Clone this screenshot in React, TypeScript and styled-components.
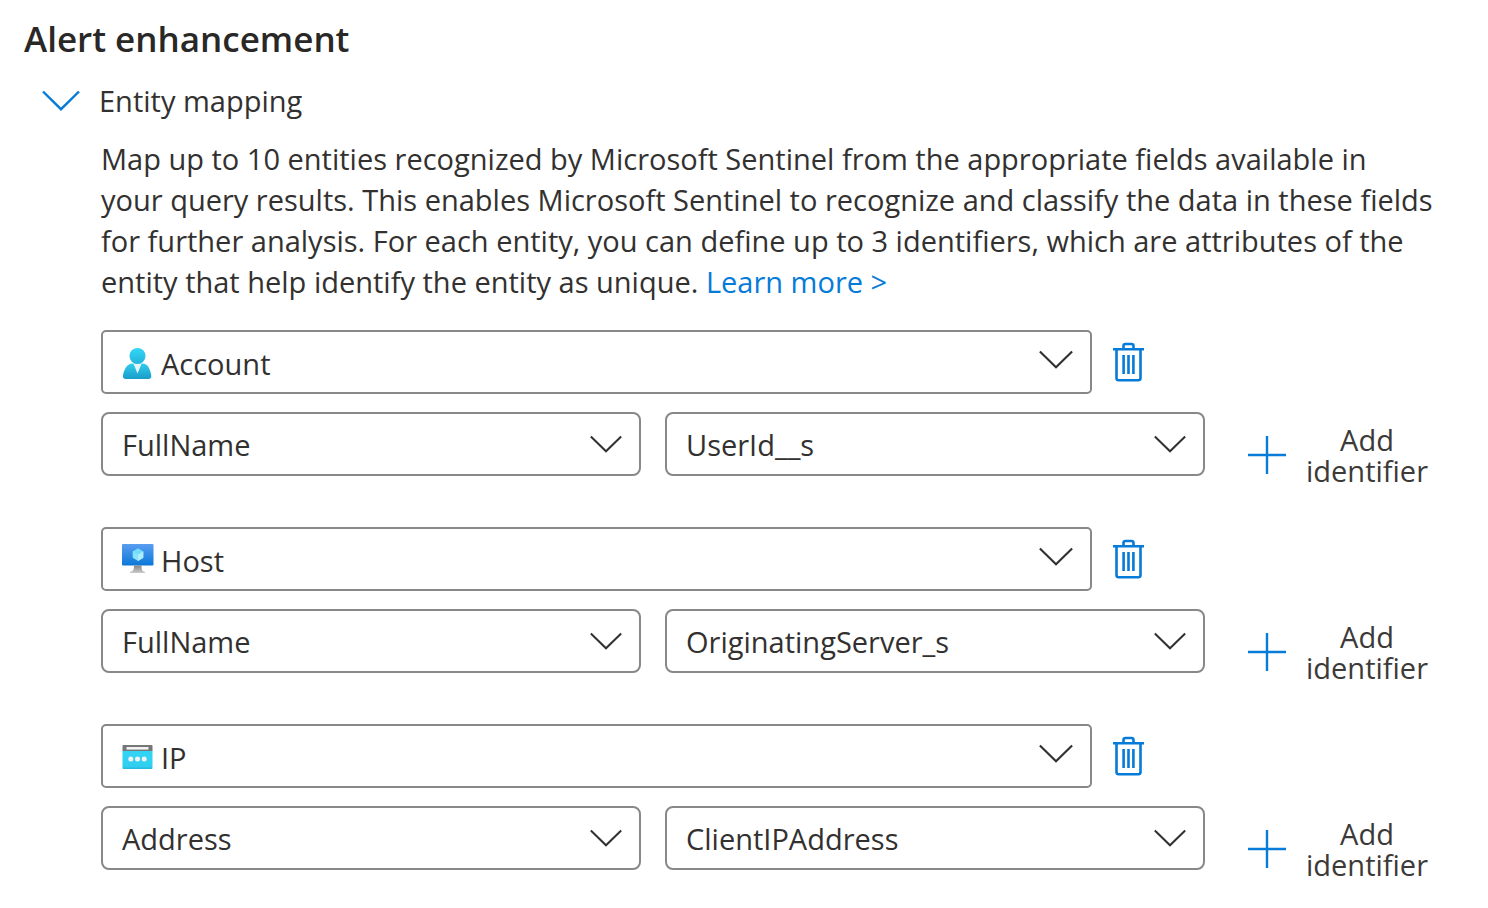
import React, { useState } from "react";
import styled, { createGlobalStyle } from "styled-components";

const GlobalStyle = createGlobalStyle`
  *, *::before, *::after { box-sizing: border-box; }
  body {
    margin: 0;
    background: #ffffff;
    color: #323130;
    font-family: "Segoe UI", "Open Sans", "Noto Sans", sans-serif;
    font-size: 29px;
    line-height: 41px;
  }
`;

const blue = "#067bd8";

const Page = styled.main`
  padding: 15px 44px 36px 24px;
`;

const Title = styled.h1`
  margin: 0;
  font-size: 35px;
  font-weight: 600;
  line-height: 48px;
  color: #292827;
`;

const SectionToggle = styled.button`
  display: flex;
  align-items: center;
  gap: 19px;
  margin-top: 17px;
  padding: 0 0 0 18px;
  border: 0;
  background: none;
  color: inherit;
  font: inherit;
  cursor: pointer;
`;

const SectionBody = styled.section`
  padding-left: 77px;
`;

const Description = styled.p`
  margin: 17px 0 28px;
`;

const LearnMore = styled.a`
  color: ${blue};
  text-decoration: none;
  &:hover { text-decoration: underline; }
`;

const MappingList = styled.div`
  display: flex;
  flex-direction: column;
  gap: 51px;
`;

const Mapping = styled.div`
  display: flex;
  flex-direction: column;
  gap: 18px;
`;

const EntityRow = styled.div`
  display: flex;
  align-items: center;
  gap: 20px;
  padding-right: 299px;
`;

const IdentifierRow = styled.div`
  display: flex;
  gap: 43px;
  height: 64px;
  padding-right: 16px;
`;

const IdentifierFields = styled.div`
  flex: 1;
  display: grid;
  grid-template-columns: 1fr 1fr;
  gap: 24px;
`;

const Field = styled.div`
  position: relative;
  flex: 1;
  min-width: 0;
`;

const Select = styled.select<{ $entity?: boolean }>`
  display: block;
  width: 100%;
  height: 64px;
  padding: ${(p) => (p.$entity ? "3px 60px 0 58px" : "1px 60px 0 19px")};
  appearance: none;
  border: 2px solid #8a8886;
  border-radius: ${(p) => (p.$entity ? "5px" : "8px")};
  background: #ffffff;
  color: inherit;
  font: inherit;
  cursor: pointer;
`;

const FieldIcon = styled.span`
  position: absolute;
  top: 16px;
  left: 21px;
  display: flex;
  pointer-events: none;
`;

const FieldChevron = styled.span<{ $entity?: boolean }>`
  position: absolute;
  top: ${(p) => (p.$entity ? "20px" : "23px")};
  right: 19px;
  display: flex;
  pointer-events: none;
`;

const DeleteButton = styled.button`
  display: flex;
  padding: 0;
  border: 0;
  background: none;
  color: ${blue};
  cursor: pointer;
`;

const AddButton = styled.button`
  display: flex;
  align-items: center;
  gap: 20px;
  flex: none;
  height: 86px;
  padding: 0;
  border: 0;
  background: none;
  color: #3b3a39;
  font: inherit;
  line-height: 31px;
  cursor: pointer;
`;

const AddLabel = styled.span`
  width: 122px;
  text-align: center;
`;

const Chevron = ({ width, color }: { width: number; color: string }) => (
  <svg width={width} height={width / 2 + 2} viewBox="0 0 38 21" fill="none" stroke={color} strokeWidth="2.4" aria-hidden="true">
    <path d="M1 1.5 19 19.2 37 1.5" />
  </svg>
);

const TrashIcon = () => (
  <svg width="33" height="40" viewBox="0 0 33 40" fill="none" stroke="currentColor" strokeWidth="2.6" aria-hidden="true">
    <path d="M1 7.2h31M11.5 7V4a2 2 0 0 1 2-2h6a2 2 0 0 1 2 2v3M4.5 7.5V36a2.2 2.2 0 0 0 2.2 2.2h19.6a2.2 2.2 0 0 0 2.2-2.2V7.5" />
    <path d="M11.6 13v19M16.5 13v19M21.4 13v19" />
  </svg>
);

const PlusIcon = () => (
  <svg width="38" height="38" viewBox="0 0 38 38" stroke={blue} strokeWidth="2.4" aria-hidden="true">
    <path d="M19 0v38M0 19h38" />
  </svg>
);

const AccountIcon = () => (
  <svg width="34" height="34" viewBox="0 0 34 34" aria-hidden="true">
    <defs>
      <linearGradient id="accountBody" x1="0" y1="0" x2="0" y2="1">
        <stop offset="0" stopColor="#32cdec" />
        <stop offset="1" stopColor="#199cc9" />
      </linearGradient>
      <linearGradient id="accountHead" x1="0" y1="0" x2="0" y2="1">
        <stop offset="0" stopColor="#32d8f5" />
        <stop offset="1" stopColor="#25b3da" />
      </linearGradient>
    </defs>
    <path d="M3.5 33a2.600 2.600 0 0 1-2.600-3C2 23 5.400 17.600 10.500 17.600h10C25.600 17.600 28.400 23 29.300 30a2.600 2.600 0 0 1-2.600 3Z" fill="url(#accountBody)" />
    <path d="M11.300 17.500h8.400L15.500 27.500Z" fill="#e3f7fb" />
    <circle cx="15.500" cy="10" r="8" fill="url(#accountHead)" />
  </svg>
);

const HostIcon = () => (
  <svg width="34" height="34" viewBox="0 0 34 34" aria-hidden="true">
    <defs>
      <linearGradient id="hostScreen" x1="0" y1="0" x2="0" y2="1">
        <stop offset="0" stopColor="#5a9df0" />
        <stop offset="1" stopColor="#0b78d8" />
      </linearGradient>
      <linearGradient id="hostStand" x1="0" y1="0" x2="0" y2="1">
        <stop offset="0" stopColor="#858585" />
        <stop offset="1" stopColor="#cccccc" />
      </linearGradient>
    </defs>
    <rect y="1" width="31.500" height="21.500" rx="1" fill="url(#hostScreen)" />
    <path d="M12 22.500h7.500c0 4 .5 5.500 3.500 6.500V30H8v-1c3.500-1 4-2.500 4-6.500Z" fill="url(#hostStand)" />
    <path d="m16 5.500 5.300 3v6.300L16 18l-5.300-3.200V8.500Z" fill="#86e5fb" />
    <path d="m16 5.500 5.300 3L16 11.700l-5.300-3.200Z" fill="#74dcfa" />
    <path d="m21.300 8.500-5.300 3.200V18l5.300-3.200Z" fill="#b0edfc" />
  </svg>
);

const IpIcon = () => (
  <svg width="34" height="34" viewBox="0 0 34 34" aria-hidden="true">
    <defs>
      <linearGradient id="ipBody" x1="0" y1="0" x2="0" y2="1">
        <stop offset="0" stopColor="#32d4f5" />
        <stop offset=".85" stopColor="#30cff0" />
        <stop offset="1" stopColor="#25b4db" />
      </linearGradient>
    </defs>
    <path d="M.5 10.500h30V28a1 1 0 0 1-1 1h-28a1 1 0 0 1-1-1Z" fill="url(#ipBody)" />
    <path d="M1.500 5h28a1 1 0 0 1 1 1v5H.5V6a1 1 0 0 1 1-1Z" fill="#767676" />
    <rect x="4.500" y="7" width="22" height="2.600" fill="#f2f2f2" />
    <g fill="#f2f2f2">
      <circle cx="8.800" cy="19" r="2.500" />
      <circle cx="15.500" cy="19" r="2.500" />
      <circle cx="22.200" cy="19" r="2.500" />
    </g>
  </svg>
);

const mappings = [
  { entity: "Account", icon: <AccountIcon />, identifier: "FullName", value: "UserId__s" },
  { entity: "Host", icon: <HostIcon />, identifier: "FullName", value: "OriginatingServer_s" },
  { entity: "IP", icon: <IpIcon />, identifier: "Address", value: "ClientIPAddress" },
];

const Dropdown = ({ label, value, icon }: { label: string; value: string; icon?: React.ReactNode }) => (
  <Field>
    <Select aria-label={label} defaultValue={value} $entity={!!icon}>
      <option>{value}</option>
    </Select>
    {icon && <FieldIcon>{icon}</FieldIcon>}
    <FieldChevron $entity={!!icon}>
      <Chevron width={icon ? 34 : 32} color="#323130" />
    </FieldChevron>
  </Field>
);

export default function App() {
  const [open, setOpen] = useState(true);
  return (
    <>
      <GlobalStyle />
      <Page>
        <Title>Alert enhancement</Title>
        <SectionToggle type="button" aria-expanded={open} onClick={() => setOpen(!open)}>
          <Chevron width={38} color={blue} />
          Entity mapping
        </SectionToggle>
        {open && (
          <SectionBody>
            <Description>
              Map up to 10 entities recognized by Microsoft Sentinel from the appropriate fields available in
              <br />
              your query results. This enables Microsoft Sentinel to recognize and classify the data in these fields
              for further analysis. For each entity, you can define up to 3 identifiers, which are attributes of the
              <br />
              entity that help identify the entity as unique. <LearnMore href="#learn-more">Learn more &gt;</LearnMore>
            </Description>
            <MappingList>
              {mappings.map((m) => (
                <Mapping key={m.entity}>
                  <EntityRow>
                    <Dropdown label="Entity type" value={m.entity} icon={m.icon} />
                    <DeleteButton type="button" aria-label={`Delete ${m.entity}`}>
                      <TrashIcon />
                    </DeleteButton>
                  </EntityRow>
                  <IdentifierRow>
                    <IdentifierFields>
                      <Dropdown label={`${m.entity} identifier`} value={m.identifier} />
                      <Dropdown label={`${m.entity} value`} value={m.value} />
                    </IdentifierFields>
                    <AddButton type="button">
                      <PlusIcon />
                      <AddLabel>Add identifier</AddLabel>
                    </AddButton>
                  </IdentifierRow>
                </Mapping>
              ))}
            </MappingList>
          </SectionBody>
        )}
      </Page>
    </>
  );
}
